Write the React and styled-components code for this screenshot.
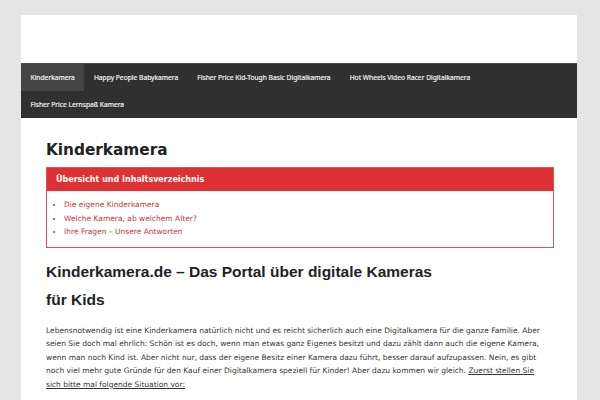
import React from 'react'
import styled, {createGlobalStyle} from 'styled-components'

const Global = createGlobalStyle`
  body {
    margin: 0;
    background: #e5e5e5;
    font-family: "DejaVu Sans", sans-serif;
  }
`;

const Page = styled.div`
  width: 556px;
  margin: 15px 0 0 21px;
  background: #fff;
`;

const Header = styled.header`
  height: 48px;
`;

const Nav = styled.nav`
  display: flex;
  flex-wrap: wrap;
  background: #303030;
  border-top: 1px solid #4a4a4a;
`;

const NavItem = styled.a`
  display: block;
  padding: 0 9.5px;
  height: 27px;
  line-height: 27px;
  font-family: "Noto Sans", sans-serif;
  font-size: 6.7px;
  font-weight: 400;
  -webkit-text-stroke: 0.2px #eee;
  color: #eee;
  background: ${p => p.$active ? '#444' : 'transparent'};
`;

const Content = styled.main`
  padding: 22px 23px 20px 25px;
`;

const Title = styled.h1`
  margin: 0 0 7px;
  font-size: 15.3px;
  line-height: 20px;
  color: #222;
`;

const Toc = styled.div`
  border: 1px solid #d9535a;
`;

const TocHead = styled.div`
  background: #df3133;
  color: #fff;
  font-size: 8px;
  font-weight: 700;
  height: 23px;
  line-height: 23px;
  padding: 0 9px;
`;

const TocList = styled.ul`
  margin: 0;
  padding: 7px 0 8px 17px;
  list-style: disc;
  font-size: 7.5px;
  line-height: 13.5px;
  color: #333;
`;

const TocLink = styled.li`
  color: #c8333a;
`;

const Heading = styled.h2`
  margin: 10px 0 10px;
  font-family: "Liberation Sans", Arial, sans-serif;
  font-size: 15.5px;
  line-height: 28px;
  font-weight: 700;
  color: #222;
`;

const Para = styled.p`
  margin: 0;
  font-size: 7.5px;
  line-height: 13.5px;
  color: #333;
`;

const Underline = styled.span`
  text-decoration: underline;
`;

const menu = [
  'Kinderkamera',
  'Happy People Babykamera',
  'Fisher Price Kid-Tough Basic Digitalkamera',
  'Hot Wheels Video Racer Digitalkamera',
  'Fisher Price Lernspaß Kamera',
];

const toc = [
  'Die eigene Kinderkamera',
  'Welche Kamera, ab welchem Alter?',
  'Ihre Fragen – Unsere Antworten',
];

export default function App() {
  return (
    <>
      <Global/>
      <Page>
        <Header/>
        <Nav>
          {menu.map((m, i) => <NavItem key={m} $active={i === 0}>{m}</NavItem>)}
        </Nav>
        <Content>
          <Title>Kinderkamera</Title>
          <Toc>
            <TocHead>Übersicht und Inhaltsverzeichnis</TocHead>
            <TocList>
              {toc.map(t => <TocLink key={t}>{t}</TocLink>)}
            </TocList>
          </Toc>
          <Heading>Kinderkamera.de – Das Portal über digitale Kameras<br/>für Kids</Heading>
          <Para>
            Lebensnotwendig ist eine Kinderkamera natürlich nicht und es reicht sicherlich auch eine Digitalkamera für die ganze Familie. Aber<br/>
            seien Sie doch mal ehrlich: Schön ist es doch, wenn man etwas ganz Eigenes besitzt und dazu zählt dann auch die eigene Kamera,<br/>
            wenn man noch Kind ist. Aber nicht nur, dass der eigene Besitz einer Kamera dazu führt, besser darauf aufzupassen. Nein, es gibt<br/>
            noch viel mehr gute Gründe für den Kauf einer Digitalkamera speziell für Kinder! Aber dazu kommen wir gleich. <Underline>Zuerst stellen Sie<br/>
            sich bitte mal folgende Situation vor:</Underline>
          </Para>
        </Content>
      </Page>
    </>
  )
}
